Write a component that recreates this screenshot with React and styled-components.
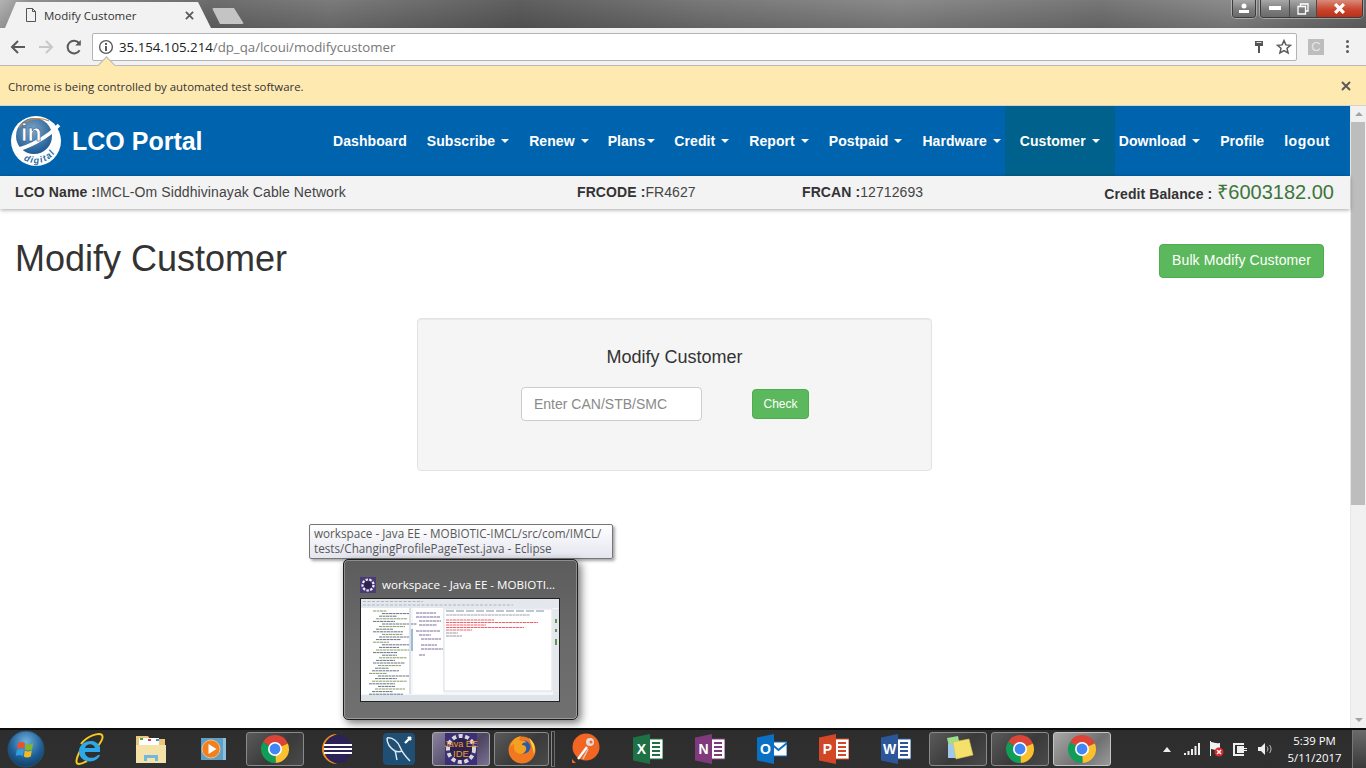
import React from "react";
import styled, { createGlobalStyle } from "styled-components";

const Global = createGlobalStyle`
  html, body { margin: 0; padding: 0; height: 100%; overflow: hidden; background: #fff; }
  * { box-sizing: border-box; }
`;

const Screen = styled.div`
  position: relative;
  width: 1366px;
  height: 768px;
  display: flex;
  flex-direction: column;
  overflow: hidden;
  font-family: "Liberation Sans", Arial, sans-serif;
`;

// Browser chrome
const TitleBar = styled.div`
  height: 28px;
  flex: none;
  display: flex;
  align-items: flex-start;
  padding-left: 5px;
  background:
    linear-gradient(rgba(0, 0, 0, 0), rgba(0, 0, 0, 0.18)),
    linear-gradient(90deg, #b4b4b4 0, #8f8f8f 30px, #6d6d6d 210px, #7b7b7b 330px, #5f5f5f 520px, #787878 700px, #8a8a8a 900px, #777 1100px, #8c8c8c 1230px, #6a6a6a 1366px);
`;

const Tab = styled.div`
  width: 206px;
  height: 26px;
  margin-top: 2px;
  padding: 0 17px 0 20px;
  display: flex;
  align-items: center;
  background: #f2f2f2;
  clip-path: polygon(0 100%, 11px 0, 193px 0, 100% 100%);
  font-family: "Open Sans", sans-serif;
  font-size: 11.5px;
  color: #333;
`;

const TabLabel = styled.span`
  flex: 1;
  margin-left: 7px;
`;

const NewTab = styled.div`
  width: 32px;
  height: 16px;
  margin: 8px 0 0 1px;
  background: #c4c4c4;
  border-radius: 2px;
  clip-path: polygon(0 0, 22px 0, 100% 100%, 8px 100%);
`;

const WindowControls = styled.div`
  margin-left: auto;
  margin-right: 3px;
  display: flex;
`;

const ControlGroup = styled.div`
  height: 18px;
  display: flex;
  margin-left: 4px;
  border: 1px solid #3c3c3c;
  border-top: none;
  border-radius: 0 0 4px 4px;
  box-shadow: 0 0 0 1px rgba(255, 255, 255, 0.35);
  overflow: hidden;
`;

const ControlButton = styled.div`
  width: ${(p) => p.$w}px;
  display: flex;
  align-items: center;
  justify-content: center;
  background: ${(p) =>
    p.$close
      ? "linear-gradient(#d98a7a, #c9452c 55%, #b8301a)"
      : "linear-gradient(#a8a8a8, #7d7d7d 55%, #6a6a6a)"};
  & + & { border-left: 1px solid #4a4a4a; }
`;

const Toolbar = styled.div`
  height: 37px;
  flex: none;
  display: flex;
  align-items: center;
  padding-left: 9px;
  background: #f2f2f2;
`;

const ToolIcon = styled.div`
  width: 18px;
  height: 18px;
  margin-right: 10px;
  display: flex;
`;

const Omnibox = styled.div`
  position: relative;
  width: 1205px;
  height: 28px;
  margin-left: -1px;
  padding: 0 4px 0 5px;
  display: flex;
  align-items: center;
  background: #fff;
  border: 1px solid #b4b4b4;
  border-radius: 2px;
  font-family: "Open Sans", sans-serif;
  font-size: 13.25px;
`;

const UrlHost = styled.span`
  margin-left: 5px;
  color: #222;
`;

const UrlPath = styled.span`
  color: #777;
`;

const OmniRight = styled.div`
  margin-left: auto;
  display: flex;
  align-items: center;
  gap: 12px;
`;

const ExtButton = styled.div`
  width: 16px;
  height: 16px;
  margin-left: 11px;
  background: #bdbdbd;
  color: #e6e6e6;
  font-size: 13px;
  line-height: 16px;
  text-align: center;
`;

const MenuDots = styled.div`
  margin-left: 22px;
  display: flex;
  flex-direction: column;
  gap: 2px;
  & > i { width: 3px; height: 3px; background: #5a5a5a; border-radius: 50%; display: block; }
`;

const InfoBar = styled.div`
  position: relative;
  height: 41px;
  flex: none;
  display: flex;
  align-items: center;
  justify-content: space-between;
  padding: 1px 15px 0 8px;
  background: #fee9b1;
  border-top: 1px solid #b9b9b9;
  border-bottom: 1px solid #d2d2d2;
  font-family: "Open Sans", sans-serif;
  font-size: 11.4px;
  color: #333;
`;

const Notch = styled.div`
  position: absolute;
  left: 100px;
  top: -7px;
  width: 13px;
  height: 13px;
  background: #fee9b1;
  border-left: 1px solid #b9b9b9;
  border-top: 1px solid #b9b9b9;
  transform: rotate(45deg);
`;

// Page area
const Viewport = styled.div`
  flex: 1;
  min-height: 0;
  display: flex;
`;

const Page = styled.div`
  flex: 1;
  min-width: 0;
  display: flex;
  flex-direction: column;
  color: #333;
`;

const Navbar = styled.div`
  height: 70px;
  flex: none;
  display: flex;
  align-items: stretch;
  padding: 0 10px 0 11px;
  background: #0063ae;
`;

const Brand = styled.div`
  display: flex;
  align-items: center;
  gap: 11px;
  color: #fff;
  font-size: 25px;
  font-weight: 700;
`;

const NavList = styled.div`
  margin-left: auto;
  display: flex;
  align-items: stretch;
`;

const NavItem = styled.div`
  display: flex;
  align-items: center;
  padding: 0 ${(p) => (p.$active ? 15 : 10)}px;
  margin: 0 ${(p) => (p.$active ? -6 : p.$tight ? -1 : 0)}px;
  background: ${(p) => (p.$active ? "#00628c" : "transparent")};
  color: #fff;
  font-size: 14px;
  font-weight: 700;
  letter-spacing: ${(p) => (p.$wide ? 0.5 : 0.07)}px;
  white-space: nowrap;
`;

const Caret = styled.span`
  width: 0;
  height: 0;
  margin-left: ${(p) => (p.$tight ? 2 : 6)}px;
  border-top: 4px solid #fff;
  border-left: 4px solid transparent;
  border-right: 4px solid transparent;
`;

const InfoStrip = styled.div`
  position: relative;
  height: 33px;
  flex: none;
  display: grid;
  grid-template-columns: 562px 225px 1fr auto;
  align-items: center;
  padding: 0 16px 2px 15px;
  background: #f3f3f3;
  box-shadow: 0 1px 4px rgba(0, 0, 0, 0.35);
  font-size: 14px;
  letter-spacing: 0.09px;
  color: #444;
`;

const InfoLabel = styled.b`
  color: #333;
`;

const Balance = styled.div`
  display: flex;
  align-items: baseline;
  gap: 5px;
  font-weight: 700;
  color: #333;
`;

const BalanceValue = styled.span`
  font-size: 20px;
  font-weight: 400;
  letter-spacing: 0;
  color: #3c763d;
`;

const Header = styled.div`
  display: flex;
  align-items: flex-start;
  justify-content: space-between;
  padding: 30px 26px 0 15px;
`;

const Heading = styled.h1`
  margin: 0;
  font-size: 36px;
  font-weight: 400;
  line-height: 40px;
  color: #333;
`;

const Button = styled.button`
  background: #5cb85c;
  border: 1px solid #4cae4c;
  border-radius: 4px;
  color: #fff;
  font-family: inherit;
  font-size: ${(p) => (p.$small ? 12 : 14)}px;
  letter-spacing: ${(p) => (p.$small ? 0 : 0.1)}px;
  height: ${(p) => (p.$small ? 30 : 34)}px;
  padding: 0 ${(p) => (p.$small ? 10.5 : 12)}px ${(p) => (p.$small ? 0 : 3)}px;
  margin-top: ${(p) => (p.$small ? 0 : 5)}px;
`;

const Well = styled.div`
  width: 515px;
  height: 153px;
  margin: 39px 0 0 417px;
  padding-top: 28px;
  background: #f5f5f5;
  border: 1px solid #e3e3e3;
  border-radius: 4px;
  box-shadow: inset 0 1px 1px rgba(0, 0, 0, 0.05);
`;

const WellTitle = styled.div`
  font-size: 18px;
  line-height: 20px;
  text-align: center;
  color: #333;
`;

const CheckRow = styled.div`
  display: flex;
  align-items: center;
  gap: 50px;
  margin: 20px 0 0 103px;
`;

const Input = styled.input`
  width: 181px;
  height: 34px;
  padding: 0 12px;
  border: 1px solid #ccc;
  border-radius: 4px;
  background: #fff;
  font-family: inherit;
  font-size: 14px;
  &::placeholder { color: #8a8a8a; opacity: 1; }
`;

const Scrollbar = styled.div`
  width: 16px;
  flex: none;
  display: flex;
  flex-direction: column;
  background: #f1f1f1;
  border-left: 1px solid #e8e8e8;
`;

const ScrollArrow = styled.div`
  height: 16px;
  flex: none;
  display: flex;
  align-items: center;
  justify-content: center;
  &::after {
    content: "";
    border-left: 4px solid transparent;
    border-right: 4px solid transparent;
    ${(p) => (p.$down ? "border-top" : "border-bottom")}: 4px solid #a3a3a3;
  }
`;

const ScrollThumb = styled.div`
  height: 383px;
  flex: none;
  margin-right: 1px;
  background: #bdbdbd;
`;

const ScrollSpace = styled.div`
  flex: 1;
`;

// Windows taskbar
const Taskbar = styled.div`
  height: 40px;
  flex: none;
  display: flex;
  align-items: stretch;
  background: linear-gradient(#2d2d2d, #303030);
  border-top: 2px solid #0c0c0c;
`;

const StartSlot = styled.div`
  width: 58px;
  display: flex;
  align-items: center;
  padding-left: 7px;
`;

const Slot = styled.div`
  width: ${(p) => p.$w || 62}px;
  padding: 2px;
  display: flex;
`;

const SlotInner = styled.div`
  flex: 1;
  display: flex;
  align-items: center;
  justify-content: center;
  border-radius: 3px;
  ${(p) => p.$state === "open" && `
    border: 1px solid #8a8a8a;
    background: linear-gradient(135deg, #5a5a5a, #3a3a3a 55%, #4a4a4a);
  `}
  ${(p) => p.$state === "focus" && `
    border: 1px solid #c4c4c4;
    background: linear-gradient(135deg, #a8a8a8, #707070 60%, #9a9a9a);
  `}
  ${(p) => p.$state === "purple" && `
    border: 1px solid #a8a8a8;
    background: linear-gradient(135deg, #8a82a0, #4b4560 60%, #7a7292);
  `}
`;

const Divider = styled.div`
  width: 4px;
  margin: 1px 0;
  border: 1px solid #6b6b6b;
  border-left-color: #888;
  border-radius: 1px;
`;

const Tray = styled.div`
  margin-left: auto;
  display: flex;
  align-items: center;
`;

const TrayIcon = styled.div`
  width: 24.4px;
  display: flex;
  justify-content: center;
`;

const Clock = styled.div`
  width: 75px;
  text-align: center;
  color: #fff;
  font-family: "Open Sans", sans-serif;
  font-size: 11.4px;
  line-height: 17px;
`;

const ShowDesktop = styled.div`
  width: 14px;
  align-self: stretch;
  border-left: 1px solid #777;
  background: linear-gradient(#6a6a6a, #3a3a3a);
`;

// Taskbar hover preview
const Tooltip = styled.div`
  position: absolute;
  left: 309px;
  top: 524px;
  width: 304px;
  height: 35px;
  padding: 1px 4px;
  background: linear-gradient(#fff, #e4e5f0);
  border: 1px solid #767676;
  border-radius: 2px;
  box-shadow: 2px 2px 3px rgba(0, 0, 0, 0.35);
  font-family: "Open Sans", sans-serif;
  font-size: 11.7px;
  line-height: 15px;
  color: #575757;
  white-space: nowrap;
`;

const Preview = styled.div`
  position: absolute;
  left: 343px;
  top: 559px;
  width: 235px;
  height: 161px;
  padding: 15px 16px;
  background: linear-gradient(#5c5c5c, #6a6a6a 50%, #707070);
  border: 1px solid #1e1e1e;
  border-radius: 5px;
  box-shadow: 0 0 0 1px rgba(255, 255, 255, 0.3) inset, 3px 3px 8px rgba(0, 0, 0, 0.55);
`;

const PreviewTitle = styled.div`
  height: 19px;
  display: flex;
  align-items: center;
  gap: 6px;
  color: #fff;
  font-family: "Open Sans", sans-serif;
  font-size: 11.6px;
  white-space: nowrap;
`;

const PreviewShot = styled.div`
  width: 200px;
  height: 104px;
  margin-top: 4px;
  display: flex;
  border: 1px solid #222;
`;

// Drawings
const PageIcon = () => (
  <svg width="12" height="14" viewBox="0 0 12 14" fill="none" stroke="#555" strokeWidth="1">
    <path d="M1.5.5h6l3 3v10h-9zM7.5.5v3h3" />
  </svg>
);

const CloseX = ({ size = 10, color = "#5a5a5a", width = 2 }) => (
  <svg width={size} height={size} viewBox="0 0 10 10" stroke={color} strokeWidth={width}>
    <path d="M1 1l8 8M9 1l-8 8" />
  </svg>
);

const Arrow = ({ color, flip }) => (
  <svg width="18" height="18" viewBox="0 0 18 18" fill="none" stroke={color} strokeWidth="2" style={flip ? { transform: "scaleX(-1)" } : undefined}>
    <path d="M16 9H3M9 3L3 9l6 6" />
  </svg>
);

const Reload = () => (
  <svg width="18" height="18" viewBox="0 0 18 18" fill="none">
    <path d="M14.6 12.2A6.4 6.4 0 1 1 14 5" stroke="#5a5a5a" strokeWidth="2" />
    <path d="M15.8 2v5.6h-5.6z" fill="#5a5a5a" />
  </svg>
);

const InfoCircle = () => (
  <svg width="16" height="16" viewBox="0 0 16 16" fill="none">
    <circle cx="8" cy="8" r="6.4" stroke="#5a5a5a" strokeWidth="1.4" />
    <path d="M7 7h2v5H7zM7 4h2v2H7z" fill="#5a5a5a" />
  </svg>
);

const KeyIcon = () => (
  <svg width="10" height="14" viewBox="0 0 10 14" fill="#555">
    <path d="M1 1h8v5H6v7H4V6H1z" />
    <path d="M2.5 2.5h5" stroke="#ddd" />
  </svg>
);

const StarIcon = () => (
  <svg width="16" height="16" viewBox="0 0 16 16" fill="none" stroke="#5a5a5a" strokeWidth="1.5">
    <path d="M8 1.6l1.9 4.3 4.6.4-3.5 3 1.1 4.6L8 11.5l-4.1 2.4L5 9.3l-3.5-3 4.6-.4z" />
  </svg>
);

const Logo = () => (
  <svg width="50" height="50" viewBox="0 0 50 50">
    <defs>
      <radialGradient id="lg" cx="45%" cy="35%" r="65%">
        <stop offset="0" stopColor="#7fa6c9" />
        <stop offset="1" stopColor="#1d5a94" />
      </radialGradient>
      <path id="logoArc" d="M8 40A23 23 0 0 0 46 33" />
    </defs>
    <circle cx="25" cy="25" r="25" fill="#fff" />
    <circle cx="23" cy="20" r="18" fill="url(#lg)" />
    <path d="M4 34C16 32 36 22 48 9" stroke="#fff" strokeWidth="3.5" fill="none" />
    <path d="M8 12C14 3 28 0 38 5" stroke="#c9873a" strokeWidth="1.2" fill="none" />
    <text x="10" y="25" fontFamily="Liberation Sans, sans-serif" fontSize="23" fontWeight="700" fill="#fff" stroke="#17487a" strokeWidth=".5">in</text>
    <text fontFamily="Liberation Sans, sans-serif" fontSize="9" fontWeight="700" fontStyle="italic" fill="#2a6aa5" letterSpacing="1.4">
      <textPath href="#logoArc" startOffset="6">digital</textPath>
    </text>
  </svg>
);

const ChromeIcon = () => (
  <svg width="30" height="30" viewBox="0 0 30 30">
    <path d="M15 15L3 8A14 14 0 0 1 27.9 9.5z" fill="#dc4437" />
    <path d="M15 15L27.9 9.5A14 14 0 0 1 15.5 29z" fill="#fbc02d" />
    <path d="M15 15l.5 14A14 14 0 0 1 3 8z" fill="#0f9d58" />
    <circle cx="15" cy="15" r="7" fill="#fff" />
    <circle cx="15" cy="15" r="5.4" fill="#4285f4" />
  </svg>
);

const StartOrb = () => (
  <svg width="38" height="38" viewBox="0 0 38 38">
    <defs>
      <radialGradient id="orb" cx="50%" cy="30%" r="75%">
        <stop offset="0" stopColor="#6fb1dc" />
        <stop offset=".6" stopColor="#1d5f96" />
        <stop offset="1" stopColor="#123a5c" />
      </radialGradient>
    </defs>
    <circle cx="19" cy="19" r="18" fill="url(#orb)" stroke="#27516e" />
    <path d="M11 13c3-1.5 5-1 7 0l-1 6c-2-1-4-1.500-7 0z" fill="#e8522f" />
    <path d="M19 13.500c2 1 4 1.500 7 0l-1 6c-3 1.500-5 1-7 0z" fill="#7fba2c" />
    <path d="M9.800 20c3-1.500 5-1 7 0l-1 6c-2-1-4-1.500-7 0z" fill="#2f9fe0" />
    <path d="M17.800 20.500c2 1 4 1.500 7 0l-1 6c-3 1.500-5 1-7 0z" fill="#f4b820" />
  </svg>
);

const IeIcon = () => (
  <svg width="32" height="34" viewBox="0 0 32 34" fill="none">
    <path d="M8 12C14 4 26 0 29 3c2 3-2 9-6 13" stroke="#f4c81e" strokeWidth="2" />
    <path d="M7 19C3 27 2 32 6 32c3 0 6-2 8-3" stroke="#f4c81e" strokeWidth="2" />
    <path d="M27 20H12c0 6 8 8 13 3h2c-3 9-20 9-21-3C5 10 22 4 27 15zM12 16h10c-1-5-9-5-10 0z" fill="#2da8e8" fillRule="evenodd" />
  </svg>
);

const FolderIcon = () => (
  <svg width="32" height="30" viewBox="0 0 32 30">
    <path d="M1 2h12l2 3h15v24H1z" fill="#e8c878" />
    <path d="M4 4h20v8H4z" fill="#fff" />
    <path d="M5 4h3v2H5z" fill="#3ca845" />
    <path d="M13 5h3v2h-3z" fill="#d8423a" />
    <path d="M21 5h3v2h-3z" fill="#3a8fd8" />
    <path d="M1 11h30v18H1z" fill="#f4e2a8" />
    <path d="M9 27v-6h14v6h-3v-3h-8v3z" fill="#6fb8e0" />
  </svg>
);

const WmpIcon = () => (
  <svg width="28" height="26" viewBox="0 0 28 26">
    <path d="M2 2h24v22H2z" fill="#5fa0c8" />
    <path d="M24 2h3v22h-3z" fill="#8cc0dc" />
    <circle cx="12" cy="13" r="9" fill="#f08020" stroke="#f6c08a" />
    <path d="M9.500 8l8 5-8 5z" fill="#fff" />
  </svg>
);

const EclipseIcon = () => (
  <svg width="32" height="32" viewBox="0 0 32 32">
    <path d="M16 1A15 15 0 1 0 16 31 16 16 0 0 1 16 1z" fill="#f09020" />
    <circle cx="17" cy="16" r="14" fill="#2c2255" />
    <path d="M3 12h28M3 16h28M3 20h28" stroke="#fff" strokeWidth="2" />
  </svg>
);

const MysqlIcon = () => (
  <svg width="32" height="32" viewBox="0 0 32 32" fill="none">
    <rect width="32" height="32" rx="4" fill="#1f4f75" />
    <path d="M4 5c6-1 11 4 13 9 2 5 5 9 10 14M4 5c0 5 3 10 8 13 1 2 1 5 2 9M12 18c3 1 5 1 7 0" stroke="#dbe8f0" strokeWidth="1.500" />
    <path d="M22 10l6-6M25 4l3 3" stroke="#fff" strokeWidth="2.400" />
  </svg>
);

const JavaIcon = () => (
  <svg width="34" height="34" viewBox="0 0 34 34">
    <rect x="1" y="1" width="32" height="32" fill="#3d2e78" />
    <circle cx="17" cy="17" r="13" fill="none" stroke="#d8d8d8" strokeWidth="4" strokeDasharray="4 2.500" />
    <circle cx="17" cy="17" r="11" fill="#2a2350" />
    <text x="17" y="15" textAnchor="middle" fontFamily="Liberation Sans, sans-serif" fontSize="9" fill="#f59a30">Java EE</text>
    <text x="17" y="25" textAnchor="middle" fontFamily="Liberation Sans, sans-serif" fontSize="9.500" fill="#f59a30">IDE</text>
  </svg>
);

const FirefoxIcon = () => (
  <svg width="30" height="30" viewBox="0 0 30 30">
    <circle cx="15" cy="16" r="13.500" fill="#f07820" />
    <circle cx="17" cy="13" r="6.500" fill="#2a5aa8" />
    <path d="M3 13C5 6 9 3 14 2c-2 2-2 4-1 5 2-1 5-1 7 2-3-1-5 0-5 2 3 0 5 2 4 5-1 4-7 5-10 2-3-3-2-6-2-8-2 1-3 2-4 3z" fill="#f4a020" />
    <path d="M22 4c5 4 7 10 5 16-1-6-3-11-5-16z" fill="#fcd040" />
  </svg>
);

const AppIcon = () => (
  <svg width="30" height="32" viewBox="0 0 30 32" fill="none">
    <circle cx="15" cy="14" r="13.500" fill="#f26522" />
    <path d="M1 26l4 4H1z" fill="#f26522" />
    <path d="M7 26l9-12" stroke="#fff" strokeWidth="2.400" />
    <path d="M12 26l5-10" stroke="#ccc" strokeWidth="1.600" />
    <circle cx="19" cy="9" r="4" fill="#ddd" />
    <circle cx="20" cy="9" r="1.500" fill="#f26522" />
  </svg>
);

const OfficeIcon = ({ color, letter }) => (
  <svg width="30" height="30" viewBox="0 0 30 30">
    <path d="M12 5h18v20H12z" fill="#fff" stroke={color} />
    <path d="M19 9h8M19 13h8M19 17h8M19 21h8" stroke={color} strokeWidth="2" />
    <path d="M0 3.500L17 0v30L0 26.500z" fill={color} />
    <text x="8.500" y="20" textAnchor="middle" fontFamily="Liberation Sans, sans-serif" fontSize="14" fontWeight="700" fill="#fff">{letter}</text>
  </svg>
);

const OutlookIcon = () => (
  <svg width="30" height="30" viewBox="0 0 30 30">
    <path d="M13 8h17v14H13z" fill="#fff" stroke="#0b6fc4" />
    <path d="M13 9l8.500 7L30 9" fill="none" stroke="#0b6fc4" strokeWidth="2" />
    <path d="M0 3.500L17 0v30L0 26.500z" fill="#0b6fc4" />
    <text x="8.500" y="20" textAnchor="middle" fontFamily="Liberation Sans, sans-serif" fontSize="14" fontWeight="700" fill="#fff">O</text>
  </svg>
);

const StickyIcon = () => (
  <svg width="32" height="28" viewBox="0 0 32 28">
    <path d="M5 3l11-2 3 14-11 2z" fill="#9fdc8c" />
    <path d="M6 9h12v14H6z" fill="#9fc8ee" />
    <path d="M11 7l16-3 4 16-17 4z" fill="#f6e06c" stroke="#d8c050" strokeWidth=".6" />
  </svg>
);

const TrayUp = () => (
  <svg width="8" height="5" viewBox="0 0 8 5" fill="#eee"><path d="M4 0l4 5H0z" /></svg>
);

const SignalIcon = () => (
  <svg width="16" height="12" viewBox="0 0 16 12" fill="#eee">
    <path d="M0 10h2v2H0zM3.500 8h2v4h-2zM7 6h2v6H7zM10.500 3h2v9h-2zM14 0h2v12h-2z" />
  </svg>
);

const FlagIcon = () => (
  <svg width="16" height="16" viewBox="0 0 16 16">
    <path d="M2 0h1v15H2z" fill="#eee" />
    <path d="M3 1c3 0 5 2 9 1v7c-4 1-6-1-9-1z" fill="#f2f2f2" />
    <circle cx="11" cy="11" r="4.500" fill="#d8282a" />
    <path d="M9 9l4 4M13 9l-4 4" stroke="#fff" strokeWidth="1.400" />
  </svg>
);

const PowerIcon = () => (
  <svg width="16" height="16" viewBox="0 0 16 16" fill="#eee">
    <path d="M1 2h11v2H3v9h9v2H1z" />
    <path d="M5 5h7v2h3v1h-3v1h3v1h-3v2H5z" />
  </svg>
);

const VolumeIcon = () => (
  <svg width="16" height="14" viewBox="0 0 16 14" fill="none">
    <path d="M1 5h3l4-4v12L4 9H1z" fill="#eee" />
    <path d="M10 4.500c1.200 1.500 1.200 3.500 0 5M12.500 3c2 2.500 2 5.500 0 8" stroke="#bbb" />
  </svg>
);

const GearSmall = () => (
  <svg width="16" height="16" viewBox="0 0 16 16">
    <rect width="16" height="16" fill="#4b3a78" />
    <circle cx="8" cy="8" r="5.500" fill="none" stroke="#eee" strokeWidth="2.200" strokeDasharray="2.400 1.400" />
    <circle cx="8" cy="8" r="3.800" fill="#2a2350" />
  </svg>
);

// Left tree and code lines of the small Eclipse picture
const treeLines = Array.from({ length: 34 }, (_, i) => ({
  y: 12 + i * 2.6,
  x: 6 + ((i * 7) % 4) * 3 + (i > 20 ? 2 : 6),
  w: 14 + ((i * 13) % 22),
}));
const redLines = [48, 92, 40, 78, 26];

const EclipseShot = () => (
  <svg width="198" height="102" viewBox="0 0 198 102">
    <rect width="198" height="102" fill="#f4f7fa" />
    <rect width="198" height="9" fill="#e4e8ee" />
    <path d="M2 2.500h60M2 6h150" stroke="#9aa2ae" strokeWidth=".7" strokeDasharray="3 1.500" />
    <rect y="9" width="48" height="86" fill="#fff" />
    <rect x="52" y="9" width="30" height="86" fill="#fff" />
    <rect x="83" y="10" width="108" height="82" fill="#fff" stroke="#c8ced6" strokeWidth=".6" />
    {treeLines.map((l, i) => (
      <path key={l.y} d={`M${l.x} ${l.y}h${l.w}`} stroke={i % 3 === 0 ? "#8a9a6a" : "#6a7686"} strokeWidth="1" strokeDasharray="3 .5" />
    ))}
    <path d="M55 14h20M55 18h24M58 22h22M58 26h18M55 32h24M58 36h12M60 40h20M60 46h16M60 50h22M58 56h6" stroke="#6a5a8a" strokeWidth=".9" strokeDasharray="3 .5" />
    <path d="M85 12h100" stroke="#a8b4c2" strokeWidth="1.500" strokeDasharray="8 2" />
    <path d="M85 16h84" stroke="#778" strokeWidth=".7" strokeDasharray="3 .5" />
    {redLines.map((w, i) => (
      <path key={i} d={`M85 ${21 + i * 2.5}h${w}`} stroke="#ee3a44" strokeWidth=".8" strokeDasharray="3 .5" />
    ))}
    <path d="M85 34h12M85 37h16" stroke="#667" strokeWidth=".7" strokeDasharray="3 .5" />
    <rect x="48" y="9" width="2" height="86" fill="#dde2e8" />
    <rect x="50" y="30" width="2" height="22" fill="#9db8d8" />
    <rect y="96" width="198" height="6" fill="#dfe4ea" />
    <rect x="192" y="10" width="6" height="86" fill="#e4e8ee" />
    <path d="M195 20v4M195 30v3M195 40v6" stroke="#5a9a4a" strokeWidth="2" />
  </svg>
);

const navItems = [
  { label: "Dashboard" },
  { label: "Subscribe", caret: true },
  { label: "Renew", caret: true },
  { label: "Plans", caret: true, tight: true },
  { label: "Credit", caret: true },
  { label: "Report", caret: true },
  { label: "Postpaid", caret: true },
  { label: "Hardware", caret: true },
  { label: "Customer", caret: true, active: true },
  { label: "Download", caret: true },
  { label: "Profile" },
  { label: "logout", wide: true },
];

const pinned = [
  { icon: <IeIcon /> },
  { icon: <FolderIcon /> },
  { icon: <WmpIcon /> },
  { icon: <ChromeIcon />, state: "open" },
  { icon: <EclipseIcon /> },
  { icon: <MysqlIcon /> },
  { icon: <JavaIcon />, state: "purple" },
  { icon: <FirefoxIcon />, state: "open", w: 59 },
];

const running = [
  { icon: <AppIcon /> },
  { icon: <OfficeIcon color="#1e7145" letter="X" /> },
  { icon: <OfficeIcon color="#80397b" letter="N" /> },
  { icon: <OutlookIcon /> },
  { icon: <OfficeIcon color="#d24726" letter="P" /> },
  { icon: <OfficeIcon color="#2b579a" letter="W" /> },
  { icon: <StickyIcon />, state: "open" },
  { icon: <ChromeIcon />, state: "open" },
  { icon: <ChromeIcon />, state: "focus" },
];

export default function App() {
  return (
    <Screen>
      <Global />
      <TitleBar>
        <Tab>
          <PageIcon />
          <TabLabel>Modify Customer</TabLabel>
          <CloseX size={9} />
        </Tab>
        <NewTab />
        <WindowControls>
          <ControlGroup>
            <ControlButton $w={22}>
              <svg width="12" height="11" viewBox="0 0 12 11" fill="#fff"><circle cx="6" cy="3" r="2.500" /><path d="M1 7h10v3H1z" /></svg>
            </ControlButton>
          </ControlGroup>
          <ControlGroup>
            <ControlButton $w={28}>
              <svg width="12" height="5" viewBox="0 0 12 5" fill="#fff"><path d="M0 0h12v4H0z" /></svg>
            </ControlButton>
            <ControlButton $w={27}>
              <svg width="12" height="12" viewBox="0 0 12 12" fill="none" stroke="#fff" strokeWidth="1.300"><path d="M3.500 3V1h7.500v7H9M1 3.500h7.500V11H1z" /></svg>
            </ControlButton>
            <ControlButton $w={46} $close>
              <CloseX size={11} color="#fff" width={3} />
            </ControlButton>
          </ControlGroup>
        </WindowControls>
      </TitleBar>

      <Toolbar>
        <ToolIcon><Arrow color="#5a5a5a" /></ToolIcon>
        <ToolIcon><Arrow color="#c8c8c8" flip /></ToolIcon>
        <ToolIcon><Reload /></ToolIcon>
        <Omnibox>
          <InfoCircle />
          <UrlHost>35.154.105.214</UrlHost>
          <UrlPath>/dp_qa/lcoui/modifycustomer</UrlPath>
          <OmniRight>
            <KeyIcon />
            <StarIcon />
          </OmniRight>
        </Omnibox>
        <ExtButton>C</ExtButton>
        <MenuDots><i /><i /><i /></MenuDots>
      </Toolbar>

      <InfoBar>
        <Notch />
        <span>Chrome is being controlled by automated test software.</span>
        <CloseX size={10} />
      </InfoBar>

      <Viewport>
        <Page>
          <Navbar>
            <Brand>
              <Logo />
              LCO Portal
            </Brand>
            <NavList>
              {navItems.map((item) => (
                <NavItem key={item.label} $active={item.active} $tight={item.tight} $wide={item.wide}>
                  {item.label}
                  {item.caret && <Caret $tight={item.tight} />}
                </NavItem>
              ))}
            </NavList>
          </Navbar>

          <InfoStrip>
            <div><InfoLabel>LCO Name :</InfoLabel>IMCL-Om Siddhivinayak Cable Network</div>
            <div><InfoLabel>FRCODE :</InfoLabel>FR4627</div>
            <div><InfoLabel>FRCAN :</InfoLabel>12712693</div>
            <Balance>
              Credit Balance :
              <BalanceValue>₹6003182.00</BalanceValue>
            </Balance>
          </InfoStrip>

          <Header>
            <Heading>Modify Customer</Heading>
            <Button>Bulk Modify Customer</Button>
          </Header>

          <Well>
            <WellTitle>Modify Customer</WellTitle>
            <CheckRow>
              <Input placeholder="Enter CAN/STB/SMC" />
              <Button $small>Check</Button>
            </CheckRow>
          </Well>
        </Page>

        <Scrollbar>
          <ScrollArrow />
          <ScrollThumb />
          <ScrollSpace />
          <ScrollArrow $down />
        </Scrollbar>
      </Viewport>

      <Taskbar>
        <StartSlot><StartOrb /></StartSlot>
        {pinned.map((app, i) => (
          <Slot key={i} $w={app.w}>
            <SlotInner $state={app.state}>{app.icon}</SlotInner>
          </Slot>
        ))}
        <Divider />
        {running.map((app, i) => (
          <Slot key={i}>
            <SlotInner $state={app.state}>{app.icon}</SlotInner>
          </Slot>
        ))}
        <Tray>
          <TrayIcon><TrayUp /></TrayIcon>
          <TrayIcon><SignalIcon /></TrayIcon>
          <TrayIcon><FlagIcon /></TrayIcon>
          <TrayIcon><PowerIcon /></TrayIcon>
          <TrayIcon><VolumeIcon /></TrayIcon>
          <Clock>5:39 PM<br />5/11/2017</Clock>
          <ShowDesktop />
        </Tray>
      </Taskbar>

      <Tooltip>
        workspace - Java EE - MOBIOTIC-IMCL/src/com/IMCL/<br />
        tests/ChangingProfilePageTest.java - Eclipse
      </Tooltip>
      <Preview>
        <PreviewTitle>
          <GearSmall />
          workspace - Java EE - MOBIOTI...
        </PreviewTitle>
        <PreviewShot><EclipseShot /></PreviewShot>
      </Preview>
    </Screen>
  );
}
